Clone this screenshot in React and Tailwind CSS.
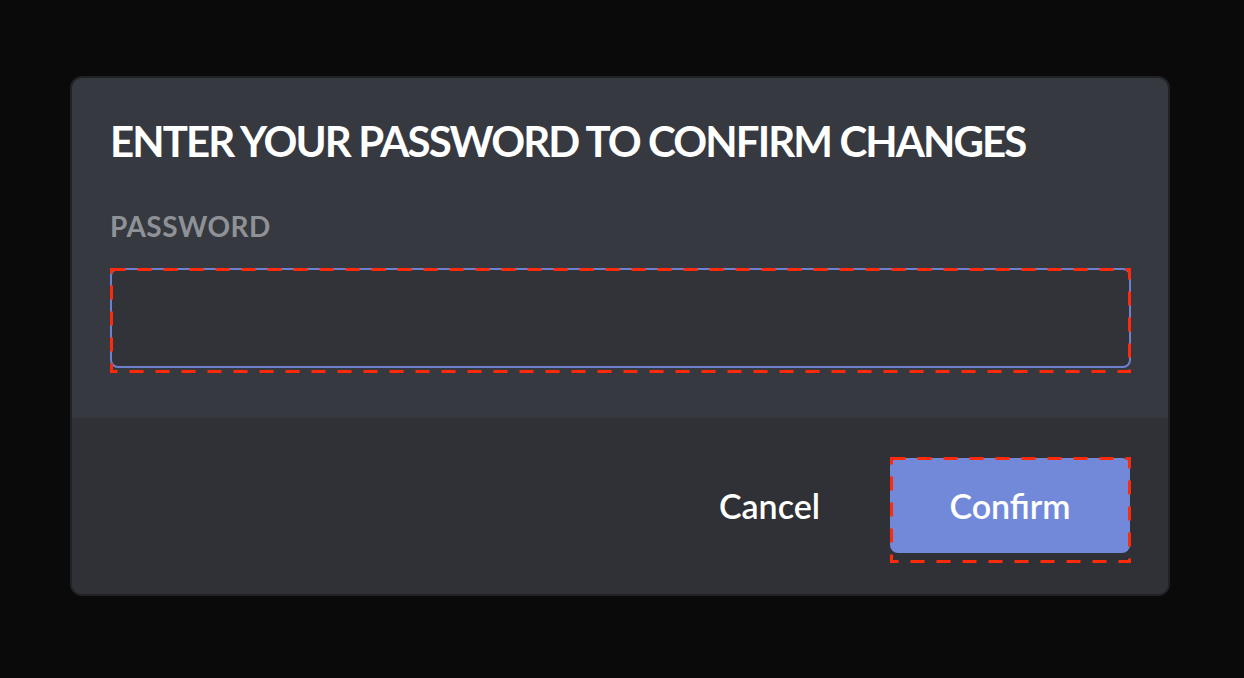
const font = { fontFamily: 'Lato, "Open Sans", sans-serif' };

function DashBox({ width, height, className }) {
  return (
    <svg
      className={`pointer-events-none absolute ${className}`}
      width={width}
      height={height}
      viewBox={`0 0 ${width} ${height}`}
    >
      <rect
        x="1.5"
        y="1.5"
        width={width - 3}
        height={height - 3}
        fill="none"
        stroke="#ff2a0a"
        strokeWidth="3"
        strokeDasharray="14 12"
      />
    </svg>
  );
}

export default function App() {
  return (
    <div className="min-h-[678px] bg-[#0a0a0a] pt-[76px]" style={font}>
      <div className="ml-[70px] w-[1100px] overflow-hidden rounded-[12px] border-2 border-[#202225] bg-[#36393f]">
        <div className="pl-[38px] pr-[37px] pt-[42px] pb-[50px]">
          <h2 className="text-[42px] font-bold leading-[42px] tracking-[-1.9px] text-white">
            ENTER YOUR PASSWORD TO CONFIRM CHANGES
          </h2>
          <label className="mt-[50px] block text-[28px] font-bold leading-[28px] tracking-[0.5px] text-[#8e9297]">
            PASSWORD
          </label>
          <div className="relative mt-[28px]">
            <input
              type="password"
              className="block h-[100px] w-full rounded-[8px] border-2 border-[#6f80cf] bg-[#313338] px-5 text-[32px] text-white outline-none"
            />
            <DashBox width={1021} height={105} className="left-0 top-0" />
          </div>
        </div>
        <div className="flex items-center justify-end gap-[32px] bg-[#2f3136] pr-[38px] pt-[40px] pb-[41px]">
          <button className="px-[38px] text-[34px] font-semibold leading-none text-white">Cancel</button>
          <div className="relative">
            <button className="h-[95px] w-[240px] rounded-[8px] bg-[#7289da] text-[34px] font-semibold text-white">
              Confirm
            </button>
            <DashBox width={241} height={106} className="left-0 top-[-1px]" />
          </div>
        </div>
      </div>
    </div>
  );
}
